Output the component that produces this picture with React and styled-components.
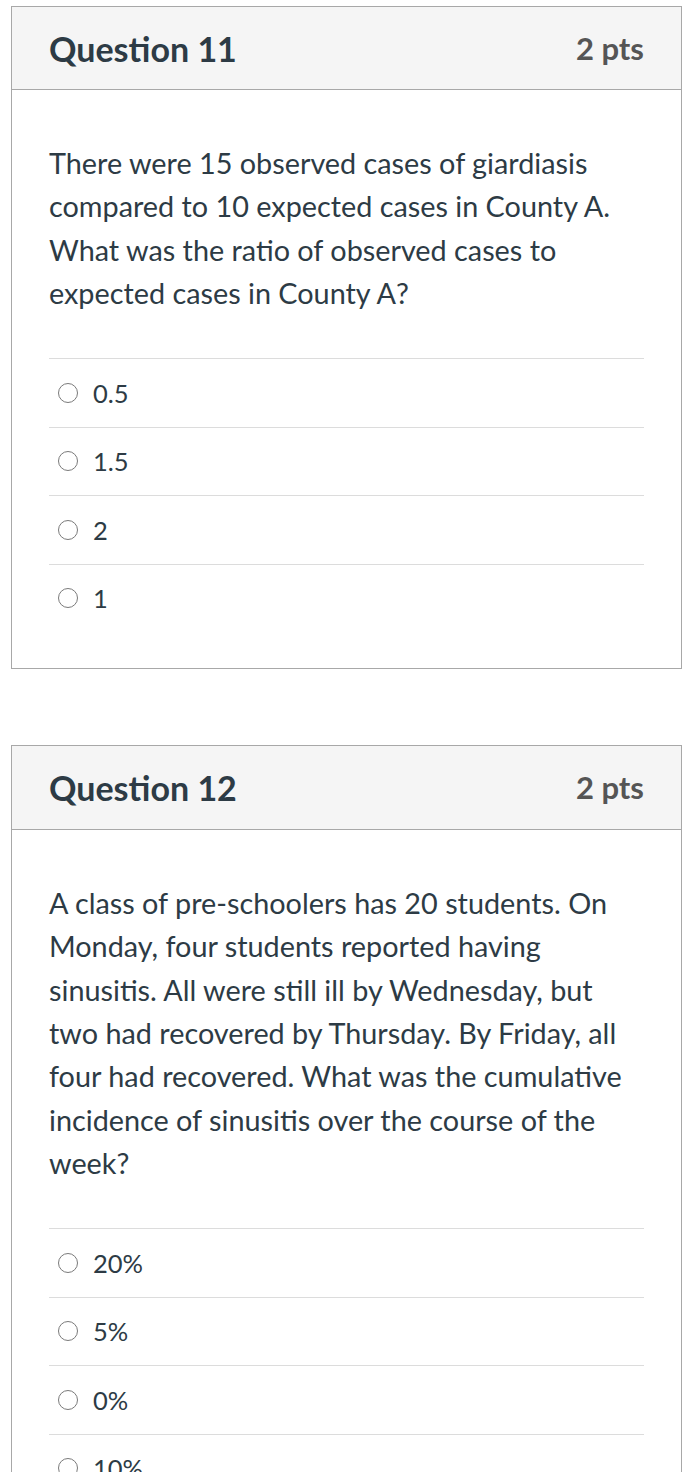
import React from "react";
import styled, { createGlobalStyle } from "styled-components";

const GlobalStyle = createGlobalStyle`
  body {
    margin: 0;
    background: #fff;
    font-family: Lato, "Liberation Sans", sans-serif;
    color: #2d3b45;
  }
`;

const Page = styled.div`
  padding: 6px 14px 0 11px;
  display: flex;
  flex-direction: column;
  gap: 76px;
`;

const Card = styled.section`
  border: 1px solid #a8a8a8;
  background: #fff;
`;

const Header = styled.header`
  display: flex;
  align-items: center;
  justify-content: space-between;
  height: ${(p) => p.$height}px;
  padding: 0 37px;
  background: #f5f5f5;
  border-bottom: 1px solid #a8a8a8;
  box-sizing: border-box;
`;

const Title = styled.h2`
  margin: 0;
  font-size: 34px;
  font-weight: 700;
  color: #2d3b45;
`;

const Points = styled.span`
  font-size: 31px;
  font-weight: 700;
  color: #555;
`;

const Body = styled.div`
  padding: 52px 37px 36px;
`;

const Text = styled.p`
  margin: 0 0 43px;
  font-size: 28.8px;
  line-height: 43.35px;
  color: #2d3b45;
`;

const Answers = styled.ul`
  list-style: none;
  margin: 0;
  padding: 0;
`;

const Answer = styled.li`
  display: flex;
  align-items: center;
  gap: 15px;
  height: 68.4px;
  padding-left: 9px;
  border-top: 1px solid #dcdcdc;
  box-sizing: border-box;
  font-size: 25.5px;
  color: #2d3b45;
`;

const Radio = styled.span`
  width: 18px;
  height: 18px;
  border: 1.5px solid #7a7a7a;
  border-radius: 50%;
  flex: none;
`;

const questions = [
  {
    title: "Question 11",
    header: 83,
    text: "There were 15 observed cases of giardiasis compared to 10 expected cases in County A. What was the ratio of observed cases to expected cases in County A?",
    answers: ["0.5", "1.5", "2", "1"],
  },
  {
    title: "Question 12",
    header: 84,
    text: "A class of pre-schoolers has 20 students. On Monday, four students reported having sinusitis. All were still ill by Wednesday, but two had recovered by Thursday. By Friday, all four had recovered. What was the cumulative incidence of sinusitis over the course of the week?",
    answers: ["20%", "5%", "0%", "10%"],
  },
];

export default function App() {
  return (
    <>
      <GlobalStyle />
      <Page>
        {questions.map((q) => (
          <Card key={q.title}>
            <Header $height={q.header}>
              <Title>{q.title}</Title>
              <Points>2 pts</Points>
            </Header>
            <Body>
              <Text>{q.text}</Text>
              <Answers>
                {q.answers.map((a) => (
                  <Answer key={a}>
                    <Radio />
                    {a}
                  </Answer>
                ))}
              </Answers>
            </Body>
          </Card>
        ))}
      </Page>
    </>
  );
}
